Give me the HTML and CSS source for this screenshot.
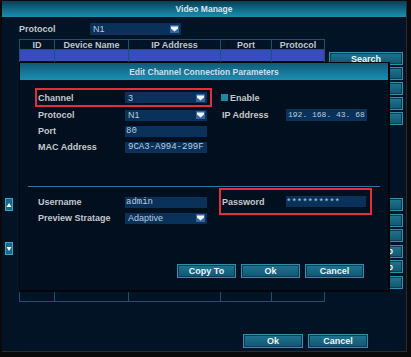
FILE: index.html
```html
<!DOCTYPE html>
<html lang="en">
<head>
  <meta charset="UTF-8" />
  <title>Video Manage</title>
  <link rel="stylesheet" href="styles.css">
</head>
<body>
  <div class="window">
    <div class="titlebar">Video Manage</div>

    <div class="proto-row">
      <span class="proto-label">Protocol</span>
      <div class="select proto-select">
        <span>N1</span>
        <svg class="arrow" width="9" height="8" viewBox="0 0 9 8"><polygon points="1,1.5 8,1.5 8,3.5 4.5,6.5 1,3.5" fill="#f2f6fb"/></svg>
      </div>
    </div>

    <div class="content">
      <div class="scrollers">
        <div class="scroll up"><svg width="6" height="6" viewBox="0 0 6 6"><polygon points="3,1 5.5,5 0.5,5" fill="#fff"/></svg></div>
        <div class="scroll down"><svg width="6" height="6" viewBox="0 0 6 6"><polygon points="0.5,1 5.5,1 3,5" fill="#fff"/></svg></div>
      </div>

      <div class="table">
        <div class="trow thead">
          <div>ID</div>
          <div>Device Name</div>
          <div>IP Address</div>
          <div>Port</div>
          <div>Protocol</div>
        </div>
        <div class="trow selected">
          <div></div><div></div><div></div><div></div><div></div>
        </div>
        <div class="trow tbody">
          <div></div><div></div><div></div><div></div><div></div>
        </div>
      </div>

      <!-- buttons behind the popup keep no visible label -->
      <div class="side">
        <div class="side-group">
          <button class="btn">Search</button>
          <button class="btn"></button>
          <button class="btn"></button>
          <button class="btn"></button>
          <button class="btn"></button>
        </div>
        <div class="side-group lower-group">
          <button class="btn"></button>
          <button class="btn"></button>
          <button class="btn"></button>
          <button class="btn cut">Setup</button>
          <button class="btn cut">Backup</button>
          <button class="btn"></button>
        </div>
      </div>
    </div>

    <div class="footer">
      <button class="btn">Ok</button>
      <button class="btn">Cancel</button>
    </div>

    <!-- popup over the list -->
    <div class="dialog">
      <div class="dialog-title">Edit Channel Connection Parameters</div>

      <div class="upper">
        <div class="drow">
          <div class="field boxed">
            <span class="lbl">Channel</span>
            <div class="select">
              <span>3</span>
              <svg class="arrow" width="9" height="8" viewBox="0 0 9 8"><polygon points="1,1.5 8,1.5 8,3.5 4.5,6.5 1,3.5" fill="#f2f6fb"/></svg>
            </div>
          </div>
          <div class="rfield">
            <span class="check"></span>
            <span class="check-text">Enable</span>
          </div>
        </div>
        <div class="drow">
          <div class="field">
            <span class="lbl">Protocol</span>
            <div class="select">
              <span>N1</span>
              <svg class="arrow" width="9" height="8" viewBox="0 0 9 8"><polygon points="1,1.5 8,1.5 8,3.5 4.5,6.5 1,3.5" fill="#f2f6fb"/></svg>
            </div>
          </div>
          <div class="rfield">
            <span class="rlbl">IP Address</span>
            <div class="input ip">192. 168. 43. 68</div>
          </div>
        </div>
        <div class="drow">
          <div class="field">
            <span class="lbl">Port</span>
            <div class="input mono">80</div>
          </div>
        </div>
        <div class="drow">
          <div class="field">
            <span class="lbl">MAC Address</span>
            <div class="input mono mac">9CA3-A994-299F</div>
          </div>
        </div>
      </div>

      <div class="sep"></div>

      <div class="lower">
        <div class="lower-left">
          <div class="field">
            <span class="lbl">Username</span>
            <div class="input mono">admin</div>
          </div>
          <div class="field">
            <span class="lbl">Preview Stratage</span>
            <div class="select">
              <span>Adaptive</span>
              <svg class="arrow" width="9" height="8" viewBox="0 0 9 8"><polygon points="1,1.5 8,1.5 8,3.5 4.5,6.5 1,3.5" fill="#f2f6fb"/></svg>
            </div>
          </div>
        </div>
        <div class="pass-box">
          <span class="rlbl">Password</span>
          <div class="input mono pass"><span class="stars">**********</span></div>
        </div>
      </div>

      <div class="dialog-buttons">
        <button class="btn">Copy To</button>
        <button class="btn">Ok</button>
        <button class="btn">Cancel</button>
      </div>
    </div>
  </div>
</body>
</html>
```

FILE: styles.css
```css
* {
  box-sizing: border-box;
}

body {
  margin: 0;
  background: #0a0a0a;
  font-family: 'Liberation Sans', Arial, sans-serif;
  font-size: 9px;
  font-weight: bold;
  color: #c3c8cd;
}

.window {
  position: relative;
  margin: 1px 0 0 2px;
  width: 405px;
  height: 351px;
  background: #021326;
  border-right: 1px solid #2c2c2c;
  border-bottom: 1px solid #2c2c2c;
}

.titlebar {
  height: 16px;
  line-height: 17px;
  text-align: center;
  font-size: 8.5px;
  color: #dce4ea;
  background: linear-gradient(to bottom, #0a3d55, #12708f 60%, #1b8db0);
}

.proto-row {
  display: flex;
  align-items: center;
  margin-top: 6px;
  padding-left: 17px;
  height: 12px;
}

.proto-label {
  width: 71px;
}

.select {
  display: flex;
  align-items: center;
  justify-content: space-between;
  width: 82px;
  height: 11px;
  padding: 0 2px 0 3px;
  background: #0a3159;
  color: #b9c9db;
  font-weight: normal;
}

.proto-select {
  width: 91px;
  height: 12px;
}

.arrow {
  background: #3466a6;
}

.content {
  display: flex;
  margin-top: 4px;
  padding-left: 3px;
}

.scrollers {
  display: flex;
  flex-direction: column;
  width: 8px;
}

.scroll {
  display: flex;
  align-items: center;
  justify-content: center;
  width: 8px;
  height: 13px;
  background: #166b89;
  border: 1px solid #3aa2c2;
}

.scroll.up {
  margin-top: 159px;
}

.scroll.down {
  margin-top: 31px;
}

.table {
  margin-left: 6px;
  width: 306px;
  height: 263px;
  display: flex;
  flex-direction: column;
}

.trow {
  display: grid;
  grid-template-columns: 35px 74px 92px 51px 54px;
}

.trow div {
  border-left: 1px solid #14566d;
}

.trow div:last-child {
  border-right: 1px solid #14566d;
}

.thead {
  height: 11px;
  border-top: 1px solid #14566d;
  border-bottom: 1px solid #14566d;
}

.thead div {
  text-align: center;
  line-height: 10px;
  color: #bfc6cd;
}

.selected {
  height: 11px;
  background: #3a4bc2;
}

.tbody {
  flex: 1;
  border-bottom: 1px solid #14566d;
}

.side {
  margin-left: 4px;
  margin-top: 13px;
  width: 74px;
}

.side-group {
  display: flex;
  flex-direction: column;
  gap: 2px;
}

.lower-group {
  margin-top: 73px;
  gap: 2.5px;
}

.btn {
  height: 14px;
  width: 59px;
  padding: 0;
  font-family: 'Liberation Sans', Arial, sans-serif;
  font-size: 9px;
  font-weight: bold;
  color: #eef4f6;
  white-space: nowrap;
  background: linear-gradient(to bottom, #1f7591, #115670);
  border: 1px solid #2f8fae;
  box-shadow: inset 0 0 0 1px #0b3e52;
}

.side .btn {
  width: 74px;
  height: 13px;
}

.side .btn.cut {
  text-align: right;
  padding-right: 9px;
}

.footer {
  display: flex;
  justify-content: flex-end;
  gap: 5px;
  margin-top: 32px;
  padding-right: 38px;
}

.footer .btn {
  width: 60px;
}

.dialog {
  position: absolute;
  left: 17px;
  top: 61px;
  width: 371px;
  height: 230px;
  background: #020f1e;
  border: 1px solid #050505;
  border-right-width: 2px;
  border-bottom-width: 2px;
}

.dialog-title {
  height: 17px;
  line-height: 18px;
  text-align: center;
  font-size: 8.5px;
  color: #d4dde4;
  background: linear-gradient(to bottom, #0f5a76, #16789a 55%, #1c8db0);
}

.upper {
  padding: 8px 0 0 15px;
}

.drow {
  display: flex;
  gap: 7px;
}

.field {
  display: flex;
  align-items: center;
  width: 177px;
  height: 16px;
  padding: 0 3px 0 1px;
  border-left: 2px solid transparent;
  border-right: 2px solid transparent;
}

.field.boxed {
  height: 19px;
  border: 2px solid #e2303b;
}

.lbl {
  width: 87px;
}

.input {
  width: 82px;
  height: 11px;
  line-height: 11px;
  padding-left: 1px;
  background: #0a3159;
  color: #bccbdc;
  font-weight: normal;
  white-space: nowrap;
}

.mono {
  font-family: 'Liberation Mono', 'Courier New', monospace;
}

.mac {
  padding-left: 3px;
}

.ip {
  width: 81px;
  height: 12px;
  font-family: 'Liberation Mono', 'Courier New', monospace;
  font-size: 8px;
  padding-left: 2px;
}

.rfield {
  display: flex;
  align-items: center;
  padding-left: 2px;
}

.check {
  width: 7px;
  height: 7px;
  background: #1a8a9e;
}

.check-text {
  margin-left: 2px;
}

.rlbl {
  width: 64px;
  margin-left: 1px;
}

.sep {
  height: 1px;
  margin: 31px 8px 0 8px;
  background: #2b77a8;
}

.lower {
  display: flex;
  align-items: flex-start;
  gap: 7px;
  padding-left: 15px;
}

.lower-left {
  margin-top: 7px;
}

.pass-box {
  display: flex;
  align-items: center;
  margin-top: 1px;
  width: 153px;
  height: 27px;
  padding: 0 4px 0 0;
  border: 2px solid #e2303b;
}

.pass {
  width: 80px;
  font-size: 9px;
  padding-left: 0;
}

.stars {
  vertical-align: -2px;
}

.dialog-buttons {
  display: flex;
  justify-content: flex-end;
  gap: 5px;
  margin-top: 38px;
  padding-right: 24px;
}
```
